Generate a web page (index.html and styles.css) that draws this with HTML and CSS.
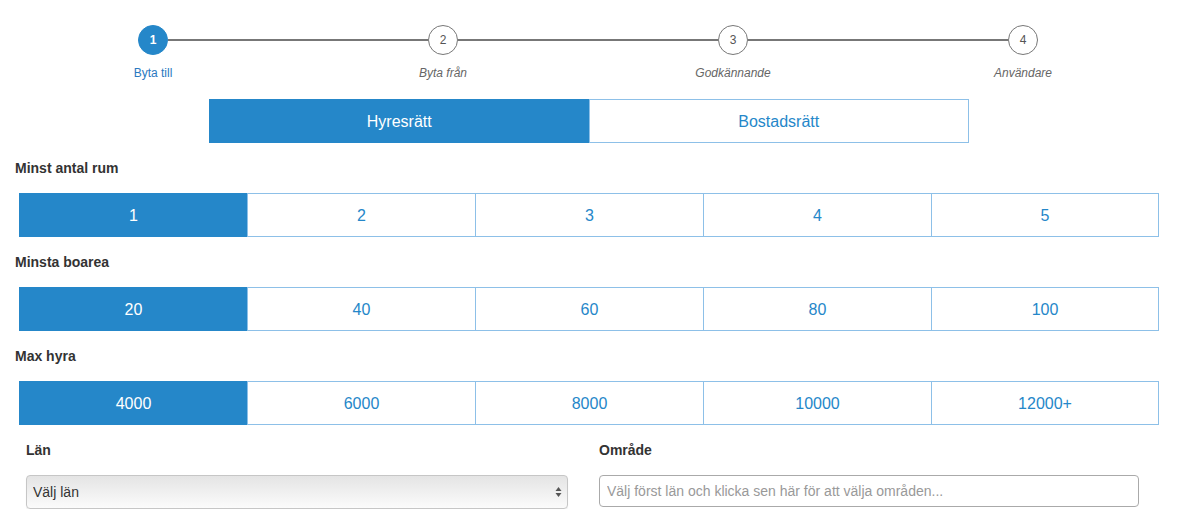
FILE: index.html
```html
<!DOCTYPE html>
<html lang="sv">
<head>
    <meta charset="UTF-8">
    <meta name="viewport" content="width=device-width, initial-scale=1.0">
    <title>Byta bostad</title>
    <link rel="stylesheet" href="styles.css">
</head>
<body>
    <div class="stepper">
        <div class="step active">
            <span class="step-circle">1</span>
            <span class="step-label">Byta till</span>
        </div>
        <div class="step-line"></div>
        <div class="step">
            <span class="step-circle">2</span>
            <span class="step-label">Byta från</span>
        </div>
        <div class="step-line"></div>
        <div class="step">
            <span class="step-circle">3</span>
            <span class="step-label">Godkännande</span>
        </div>
        <div class="step-line"></div>
        <div class="step">
            <span class="step-circle">4</span>
            <span class="step-label">Användare</span>
        </div>
    </div>

    <div class="type-toggle">
        <button class="opt selected">Hyresrätt</button>
        <button class="opt">Bostadsrätt</button>
    </div>

    <div class="filter">
        <h4 class="filter-title">Minst antal rum</h4>
        <div class="btn-row">
            <button class="opt selected">1</button>
            <button class="opt">2</button>
            <button class="opt">3</button>
            <button class="opt">4</button>
            <button class="opt">5</button>
        </div>
    </div>

    <div class="filter">
        <h4 class="filter-title">Minsta boarea</h4>
        <div class="btn-row">
            <button class="opt selected">20</button>
            <button class="opt">40</button>
            <button class="opt">60</button>
            <button class="opt">80</button>
            <button class="opt">100</button>
        </div>
    </div>

    <div class="filter">
        <h4 class="filter-title">Max hyra</h4>
        <div class="btn-row">
            <button class="opt selected">4000</button>
            <button class="opt">6000</button>
            <button class="opt">8000</button>
            <button class="opt">10000</button>
            <button class="opt">12000+</button>
        </div>
    </div>

    <div class="location">
        <div class="field field-lan">
            <label for="lan">Län</label>
            <div class="select-wrap">
                <select id="lan">
                    <option>Välj län</option>
                </select>
                <svg class="select-arrows" width="7" height="12" viewBox="0 0 7 12">
                    <path d="M3.5 1 L6.5 5 L0.5 5 Z" fill="#555"/>
                    <path d="M3.5 11 L6.5 7 L0.5 7 Z" fill="#555"/>
                </svg>
            </div>
        </div>
        <div class="field field-area">
            <label for="area">Område</label>
            <input type="text" id="area" placeholder="Välj först län och klicka sen här för att välja områden...">
        </div>
    </div>
</body>
</html>
```

FILE: styles.css
```css
body {
    margin: 0;
    font-family: "Liberation Sans", Arial, sans-serif;
    color: #333;
    background-color: #fff;
}

/* Stepper */
.stepper {
    display: flex;
    align-items: flex-start;
    width: 900px;
    margin: 25px 0 0 138px;
    height: 74px;
}

.step {
    width: 30px;
    display: flex;
    flex-direction: column;
    align-items: center;
}

.step-circle {
    box-sizing: border-box;
    width: 30px;
    height: 30px;
    border-radius: 50%;
    border: 1px solid #777;
    background-color: #fff;
    color: #555;
    font-size: 12px;
    display: flex;
    align-items: center;
    justify-content: center;
}

.step-label {
    margin-top: 11px;
    font-size: 12px;
    line-height: 14px;
    white-space: nowrap;
    font-style: italic;
    color: #666;
}

.step.active .step-circle {
    border-color: #2587c9;
    background-color: #2587c9;
    color: #fff;
    font-weight: bold;
}

.step.active .step-label {
    font-style: normal;
    color: #2a79bf;
}

.step-line {
    flex: 1;
    height: 2px;
    margin-top: 14px;
    background-color: #777;
}

/* Option buttons */
.opt {
    flex: 1;
    box-sizing: border-box;
    margin: 0;
    padding: 2px 0 0;
    border: 1px solid #8dc0e8;
    background-color: #fff;
    color: #2587c9;
    font-family: inherit;
    font-size: 16px;
    cursor: pointer;
}

.opt:not(:last-child) {
    border-right: none;
}

.opt.selected {
    background-color: #2587c9;
    border-color: #2587c9;
    color: #fff;
}

.type-toggle {
    display: flex;
    width: 760px;
    height: 44px;
    margin-left: 209px;
}

/* Filters */
.filter-title {
    margin: 15px 0 15px 15px;
    font-size: 14px;
    line-height: 20px;
    font-weight: bold;
    color: #333;
}

.btn-row {
    display: flex;
    width: 1140px;
    height: 44px;
    margin-left: 19px;
}

.btn-row .opt {
    flex: 0 0 228px;
}

/* Location */
.location {
    display: flex;
    margin-top: 15px;
}

.field label {
    display: block;
    font-size: 14px;
    line-height: 20px;
    font-weight: bold;
    color: #333;
    margin-bottom: 15px;
}

.field-lan {
    width: 542px;
    margin-left: 26px;
}

.field-area {
    width: 540px;
    margin-left: 31px;
}

.select-wrap {
    position: relative;
}

.select-wrap select {
    appearance: none;
    -webkit-appearance: none;
    box-sizing: border-box;
    width: 100%;
    height: 34px;
    padding: 0 20px 0 6px;
    border: 1px solid #c6c6c6;
    border-radius: 4px;
    background: linear-gradient(to bottom, #e4e4e4, #fbfbfb);
    box-shadow: 0 1px 1px rgba(0, 0, 0, 0.08);
    font-family: inherit;
    font-size: 14px;
    color: #333;
}

.select-arrows {
    position: absolute;
    right: 6px;
    top: 11px;
}

.field-area input {
    box-sizing: border-box;
    width: 100%;
    height: 32px;
    padding: 0 7px;
    border: 1px solid #aaa;
    border-radius: 4px;
    font-family: inherit;
    font-size: 14px;
    color: #333;
}

.field-area input::placeholder {
    color: #999;
}
```
